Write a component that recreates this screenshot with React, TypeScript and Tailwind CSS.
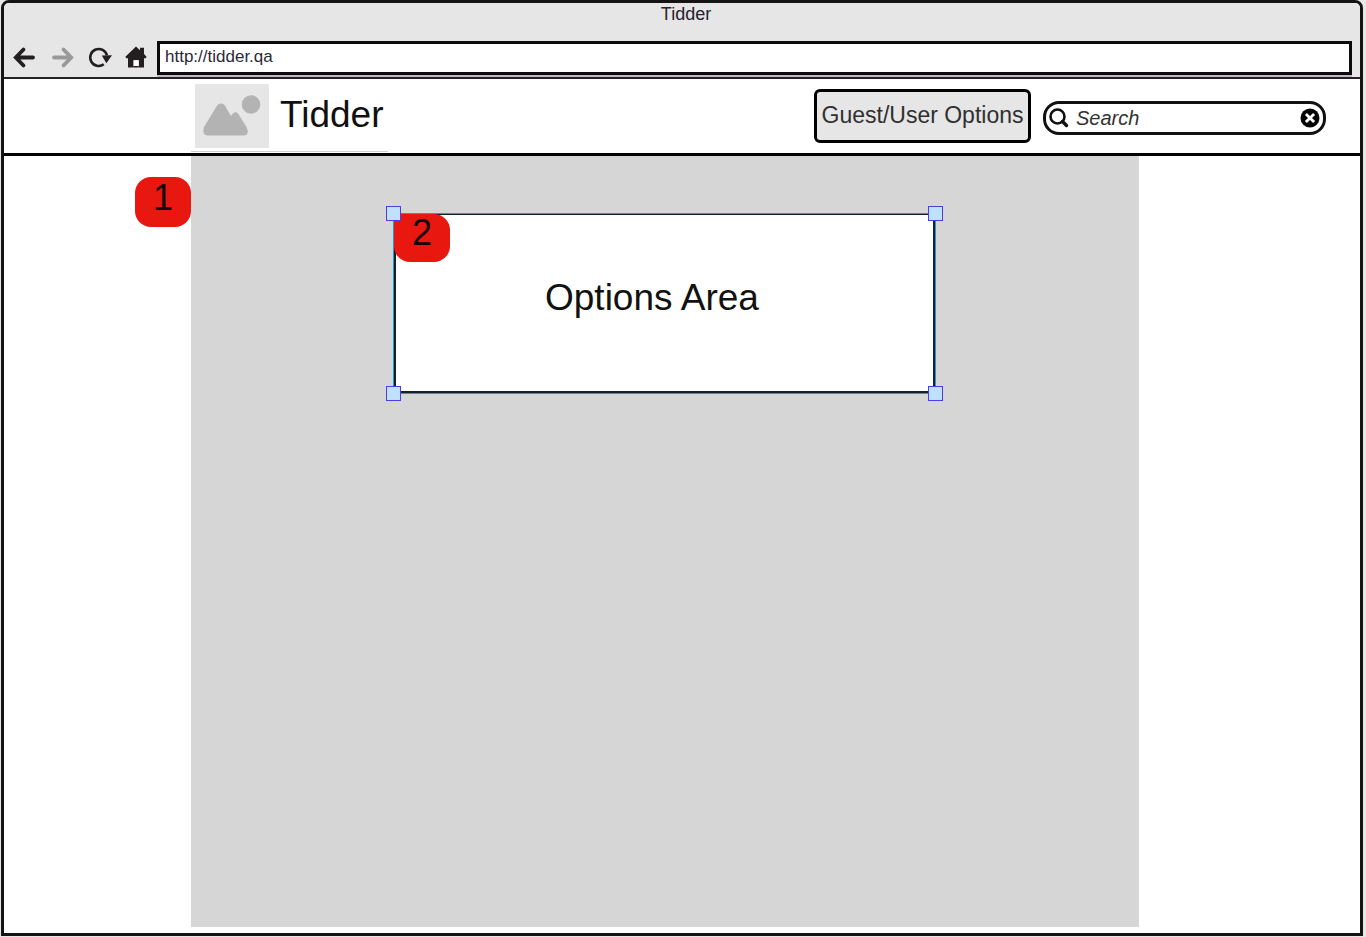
import { useState } from "react";

function BackIcon() {
  return (
    <svg width="24" height="24" viewBox="0 0 24 24" fill="none" stroke="#231f20" strokeWidth="3.8" strokeLinecap="round" strokeLinejoin="miter" aria-hidden="true">
      <path d="M11.500 4.500 3.800 12.500l7.700 8M4.500 12.500H21" />
    </svg>
  );
}

function ForwardIcon() {
  return (
    <svg width="24" height="24" viewBox="0 0 24 24" fill="none" stroke="#999999" strokeWidth="3.8" strokeLinecap="round" strokeLinejoin="miter" aria-hidden="true">
      <path d="M13.500 4.500 21.200 12.500l-7.700 8M20.500 12.500H4" />
    </svg>
  );
}

function ReloadIcon() {
  return (
    <svg width="24" height="24" viewBox="0 0 24 24" aria-hidden="true">
      <path d="M15.800 19.300A8.500 8.500 0 1 1 19 10.500" fill="none" stroke="#231f20" strokeWidth="2.600" />
      <path d="M13.800 10.400 24 10.200 18.400 18.200Z" fill="#231f20" />
    </svg>
  );
}

function HomeIcon() {
  return (
    <svg width="22" height="22" viewBox="1 0 22 22" className="overflow-visible" aria-hidden="true">
      <path d="M11 .5 15 4.300V1.800h4v6.300l2.600 2.600-.8 1.500H19V21.500h-5.300v-7.200H8.600v7.200H3V12.200H1.200L.4 10.700Z" fill="#231f20" />
      <path d="M8.600 14.300h5.100v5.700H8.600Z" fill="#ffffff" />
      <path d="M8.600 20h5.100v1.500H8.600Z" fill="#231f20" />
    </svg>
  );
}

function PictureLogo() {
  return (
    <svg width="74" height="64" viewBox="0 0 74 64" role="img" aria-label="Tidder logo">
      <rect width="74" height="64" fill="#e6e6e6" />
      <circle cx="56" cy="20.500" r="9.300" fill="#b3b3b3" />
      <path d="M9 43 21.500 22.500Q23 19.500 26 19.500T30.500 22.500L36 32 38 29.500Q40.500 27 43 29.500L51.500 43Q55 51 49 51.500H12Q6.500 50.500 9 43Z" fill="#b3b3b3" />
    </svg>
  );
}

function SearchIcon() {
  return (
    <svg width="20" height="20" viewBox="0 0 20 20" fill="none" stroke="#111111" aria-hidden="true">
      <circle cx="8.500" cy="8.500" r="7" strokeWidth="2.600" />
      <path d="m13.500 13.500 4 4" strokeWidth="3.400" strokeLinecap="round" />
    </svg>
  );
}

function ClearIcon() {
  return (
    <svg width="20" height="20" viewBox="0 0 20 20" aria-hidden="true">
      <circle cx="10" cy="10" r="9.500" fill="#050505" />
      <path d="m5.900 5.900 8.200 8.200M14.100 5.900l-8.200 8.200" stroke="#ffffff" strokeWidth="2.800" />
    </svg>
  );
}

function Badge({ label, shape }: { label: string; shape: string }) {
  return (
    <span className={`flex w-14 shrink-0 justify-center bg-[#e81710] text-4xl text-[#140404] ${shape}`}>
      {label}
    </span>
  );
}

const handle = "absolute size-[15px] border border-[#4b3ee8] bg-[#bfe0ff]";

export default function App() {
  const [url, setUrl] = useState("http://tidder.qa");
  const [query, setQuery] = useState("");

  return (
    <div className="flex min-h-screen bg-[#e8e8e8] pr-[3px] pb-px pl-px font-['Liberation_Sans',Arial,sans-serif] text-[#111111]">
      <div className="flex flex-1 flex-col overflow-hidden rounded-t-lg border-[3px] border-[#151313] bg-white">
        <div className="border-b-2 border-[#242224] bg-[#e6e6e6]">
          <div className="h-[38px] pl-2 text-center text-lg leading-[22px] text-[#25222c]">Tidder</div>
          <div className="flex h-9 items-start px-2">
            <nav className="flex h-8 w-[145px] shrink-0 items-center gap-[14px]" aria-label="Browser">
              <button type="button" aria-label="Back"><BackIcon /></button>
              <button type="button" aria-label="Forward"><ForwardIcon /></button>
              <button type="button" aria-label="Reload"><ReloadIcon /></button>
              <button type="button" aria-label="Home"><HomeIcon /></button>
            </nav>
            <input
              type="text"
              aria-label="Address"
              value={url}
              onChange={(e) => setUrl(e.target.value)}
              className="h-[34px] min-w-0 flex-1 border-[3px] border-[#0c0a0c] bg-white px-[5px] pb-0.5 text-[17px] text-[#2c2838] shadow-[0_2px_0_#bdbbbd] outline-none"
            />
          </div>
        </div>

        <header className="flex h-[77px] shrink-0 items-start border-b-[3px] border-black pr-[34px] pl-[187px]">
          <div className="flex h-[73px] w-[197px] items-start gap-[11px] border-b border-[#d0d0d0] pt-[5px] pl-1">
            <PictureLogo />
            <h1 className="text-[37px] leading-[62px]">Tidder</h1>
          </div>
          <div className="ml-auto flex items-center gap-3 pt-[10px]">
            <button type="button" className="h-[54px] w-[217px] rounded-md border-[3px] border-black bg-[#e6e6e6] pb-0.5 text-[23px] whitespace-nowrap text-[#303030]">
              Guest/User Options
            </button>
            <form role="search" className="mt-[3px] flex h-[34px] w-[283px] items-center rounded-[16px] border-[3px] border-[#111111] bg-white px-[3px]" onSubmit={(e) => e.preventDefault()}>
              <label htmlFor="search"><SearchIcon /></label>
              <input
                id="search"
                type="text"
                aria-label="Search"
                placeholder="Search"
                value={query}
                onChange={(e) => setQuery(e.target.value)}
                className="min-w-0 flex-1 px-[7px] text-xl italic outline-none placeholder:text-[#333333]"
              />
              <button type="button" aria-label="Clear search" onClick={() => setQuery("")}><ClearIcon /></button>
            </form>
          </div>
        </header>

        <div className="flex flex-1 pr-[221px] pb-[6px]">
          <aside className="flex w-[187px] shrink-0 justify-end pt-[21px]">
            <Badge label="1" shape="h-[50px] rounded-[16px] leading-[42px]" />
          </aside>
          <main className="flex-1 bg-[#d6d6d6] pt-[58px] pr-[204px] pl-[203px]">
            <section className="relative h-[179px] border-2 border-t border-[#14202a] bg-white shadow-[0_0_0_1px_#1f9bd0]">
              <div className="absolute -top-px -left-[2px]">
                <Badge label="2" shape="h-12 rounded-[16px] rounded-tl-md leading-[38px]" />
              </div>
              <h2 className="pt-[62px] pl-[149px] text-[37px] leading-[42px] whitespace-nowrap">Options Area</h2>
              <span className={`${handle} -top-[9px] -left-[10px]`} />
              <span className={`${handle} -top-[9px] -right-[10px]`} />
              <span className={`${handle} -bottom-[10px] -left-[10px]`} />
              <span className={`${handle} -right-[10px] -bottom-[10px]`} />
            </section>
          </main>
        </div>
      </div>
    </div>
  );
}
